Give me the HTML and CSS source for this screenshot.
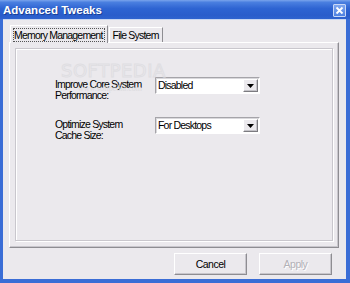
FILE: index.html
```html
<!DOCTYPE html>
<html>
<head>
<meta charset="utf-8">
<link rel="stylesheet" href="styles.css">
</head>
<body>
<div class="window">
  <div class="titlebar">
    <span class="title">Advanced Tweaks</span>
    <span class="close"><svg width="9" height="9" viewBox="0 0 9 9"><path d="M1.5 1.5 L7.5 7.5 M7.5 1.5 L1.5 7.5" stroke="#fff" stroke-width="1.8"/></svg></span>
  </div>
  <div class="client">
    <div class="tabs">
      <div class="tab active"><span class="focus">Memory Management</span></div>
      <div class="tab">File System</div>
    </div>
    <div class="panel">
      <div class="frame">
        <span class="wm-big">SOFTPEDIA</span>
        <span class="wm-small">www.softpedia.com</span>
        <div class="row">
          <div class="label">Improve Core System<br>Performance:</div>
          <div class="combo"><span class="value">Disabled</span><span class="drop"><svg width="7" height="4" viewBox="0 0 7 4"><path d="M0 0 H7 L3.5 4 Z" fill="#000"/></svg></span></div>
        </div>
        <div class="row">
          <div class="label">Optimize System<br>Cache Size:</div>
          <div class="combo"><span class="value">For Desktops</span><span class="drop"><svg width="7" height="4" viewBox="0 0 7 4"><path d="M0 0 H7 L3.5 4 Z" fill="#000"/></svg></span></div>
        </div>
      </div>
    </div>
    <div class="buttons">
      <button class="btn">Cancel</button>
      <button class="btn disabled">Apply</button>
    </div>
  </div>
</div>
</body>
</html>
```
FILE: styles.css
```css
html, body {
  margin: 0;
  padding: 0;
  width: 350px;
  height: 283px;
  overflow: hidden;
  font-family: "Liberation Sans", Arial, sans-serif;
  font-size: 10.5px;
  letter-spacing: -0.8px;
}
.window {
  width: 350px;
  height: 283px;
  box-sizing: border-box;
  display: flex;
  flex-direction: column;
  background: #3a6dd6;
}
.titlebar {
  height: 19px;
  flex: none;
  display: flex;
  align-items: center;
  justify-content: space-between;
  padding: 0 4px 0 3px;
  background: linear-gradient(to bottom, #7aa4ec 0%, #4a7fe0 12%, #2e64d2 45%, #2a5dcb 80%, #2f63cf 100%);
}
.title {
  color: #fff;
  font-weight: bold;
  font-size: 11.5px;
  letter-spacing: 0;
  text-shadow: 1px 1px 0 #1a3f95;
}
.close {
  width: 11px;
  height: 11px;
  margin-top: 1px;
  display: flex;
  align-items: center;
  justify-content: center;
  background: linear-gradient(#7fa6ee, #4f82e2);
  border: 1px solid #c9d8f6;
  border-radius: 1px;
}
.client {
  flex: 1;
  margin: 0 4px 4px 3px;
  background: #ebe9ed;
  display: flex;
  flex-direction: column;
  padding: 6px 7px 0 6px;
  box-shadow: inset 0 1px 0 #c6d5f2;
}
.tabs {
  display: flex;
  align-items: flex-end;
  height: 17px;
  padding-left: 1px;
  position: relative;
  z-index: 1;
}
.tab {
  height: 15px;
  box-sizing: border-box;
  padding: 1px 3px 0 3px;
  border: 1px solid;
  border-color: #fff #8e8d92 transparent #fff;
  border-bottom: none;
  line-height: 13px;
  color: #000;
  background: #ebe9ed;
}
.tab.active {
  height: 18px;
  margin-bottom: -1px;
  padding: 2px 2px 0 2px;
  margin-right: 1px;
}
.focus {
  display: inline-block;
  border: 1px dotted #555;
  padding: 0 1px 0 0;
  line-height: 12px;
}
.panel {
  height: 206px;
  box-sizing: border-box;
  border: 1px solid;
  border-color: #fff #8e8d92 #8e8d92 #fff;
  box-shadow: inset -1px -1px 0 #c8c6cc;
  padding: 5px 5px 6px 5px;
}
.frame {
  position: relative;
  height: 100%;
  box-sizing: border-box;
  border: 1px solid #c9c7cd;
  box-shadow: 1px 1px 0 #fff, inset 1px 1px 0 #fff;
  padding: 28px 0 0 39px;
  display: flex;
  flex-direction: column;
  gap: 22px;
}
.row {
  display: flex;
  align-items: flex-start;
  height: 18px;
}
.label {
  width: 100px;
  line-height: 11px;
  margin-top: 2px;
  color: #000;
}
.combo {
  width: 105px;
  height: 17px;
  box-sizing: border-box;
  border: 1px solid;
  border-color: #a5a4a9 #fff #fff #a5a4a9;
  box-shadow: inset 1px 1px 0 #d9d8dc;
  background: #fff;
  display: flex;
  align-items: center;
  justify-content: space-between;
  padding: 0 1px 0 2px;
}
.value {
  color: #000;
  line-height: 13px;
}
.drop {
  width: 15px;
  height: 13px;
  box-sizing: border-box;
  background: #ebe9ed;
  border: 1px solid;
  border-color: #fff #7c7b80 #7c7b80 #fff;
  box-shadow: inset -1px -1px 0 #c4c3c8;
  display: flex;
  align-items: center;
  justify-content: center;
}
.wm-big {
  position: absolute;
  left: 45px;
  top: 12px;
  font-family: "DejaVu Sans", sans-serif;
  font-size: 18px;
  letter-spacing: 0.5px;
  color: transparent;
  -webkit-text-stroke: 1px #dfdee2;
  line-height: 20px;
}
.wm-small {
  position: absolute;
  left: 62px;
  top: 35px;
  font-family: "Liberation Serif", serif;
  font-size: 8px;
  letter-spacing: 0;
  color: #dcdbdf;
  line-height: 10px;
}
.buttons {
  display: flex;
  justify-content: flex-end;
  gap: 12px;
  padding: 5px 7px 0 0;
}
.btn {
  width: 73px;
  height: 22px;
  box-sizing: border-box;
  font-family: "Liberation Sans", Arial, sans-serif;
  font-size: 10.5px;
  letter-spacing: -0.5px;
  color: #000;
  background: #ebe9ed;
  border: 1px solid;
  border-color: #fff #8e8d92 #8e8d92 #fff;
  box-shadow: inset -1px -1px 0 #c8c6cc;
  padding: 0;
  margin: 0;
}
.btn.disabled {
  color: #b3b1b7;
  text-shadow: 1px 1px 0 #fff;
}
```
